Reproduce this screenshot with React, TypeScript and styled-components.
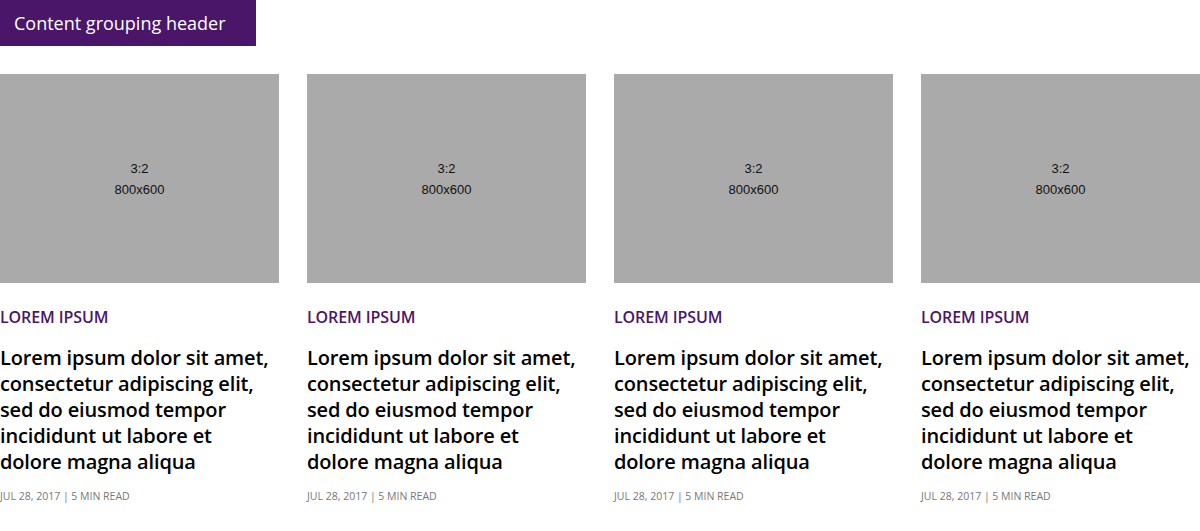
import React from 'react'
import styled, { createGlobalStyle } from 'styled-components'

const GlobalStyle = createGlobalStyle`
  body {
    margin: 0;
    background: #ffffff;
    font-family: "Open Sans", "Noto Sans", sans-serif;
  }
`

const Page = styled.div`
  width: 1200px;
`

const GroupHeader = styled.h2`
  display: inline-flex;
  align-items: center;
  box-sizing: border-box;
  width: 256px;
  height: 46px;
  margin: 0;
  padding: 0 14px 1px;
  background: #4a166a;
  color: #ffffff;
  font-size: 18px;
  font-weight: 400;
`

const Grid = styled.div`
  display: grid;
  grid-template-columns: repeat(4, 279px);
  column-gap: 28px;
  margin-top: 28px;
`

const Card = styled.article`
  display: flex;
  flex-direction: column;
`

const Thumb = styled.div`
  display: flex;
  flex-direction: column;
  align-items: center;
  justify-content: center;
  gap: 6px;
  height: 209px;
  background: #aaaaaa;
  color: #111111;
  font-family: "Liberation Sans", Arial, sans-serif;
  font-size: 13px;
  line-height: 15px;
  box-sizing: border-box;
`

const Category = styled.div`
  margin-top: 24px;
  color: #4a166a;
  font-size: 16px;
  font-weight: 600;
  line-height: 20px;
  letter-spacing: -0.1px;
`

const Title = styled.h3`
  margin: 18px 0 0;
  padding-right: 6px;
  color: #000000;
  font-size: 20px;
  font-weight: 600;
  line-height: 26px;
  letter-spacing: -0.15px;
`

const Meta = styled.div`
  margin-top: 13px;
  color: #777777;
  font-size: 10.5px;
  line-height: 16px;
`

const cards = [0, 1, 2, 3]

export default function App() {
  return (
    <Page>
      <GlobalStyle />
      <GroupHeader>Content grouping header</GroupHeader>
      <Grid>
        {cards.map((i) => (
          <Card key={i}>
            <Thumb>
              <span>3:2</span>
              <span>800x600</span>
            </Thumb>
            <Category>LOREM IPSUM</Category>
            <Title>
              Lorem ipsum dolor sit amet, consectetur adipiscing elit, sed do eiusmod tempor incididunt ut labore et dolore magna aliqua
            </Title>
            <Meta>JUL 28, 2017 | 5 MIN READ</Meta>
          </Card>
        ))}
      </Grid>
    </Page>
  )
}
